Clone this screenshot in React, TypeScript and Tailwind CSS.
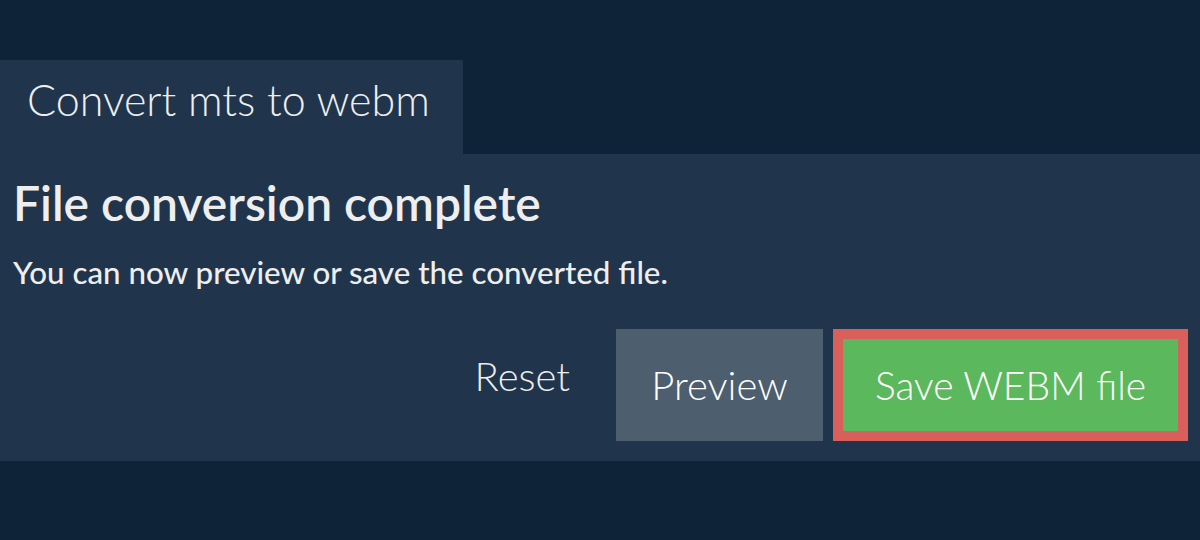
export default function App() {
  return (
    <div className="min-h-[540px] bg-[#0f2338] pt-[60px] font-['Lato','Liberation_Sans',sans-serif] text-[#eeeeee]">
      <div className="h-[94px] w-[463px] bg-[#20354c] pl-[27px] pt-[14px] text-[43px] leading-[1.2] font-light">
        Convert mts to webm
      </div>
      <section className="bg-[#20354c] pl-[13px] pr-[12px] pt-[20px] pb-[20px]">
        <h1 className="text-[48px] leading-[1.2] font-semibold">File conversion complete</h1>
        <p className="mt-[22px] text-[31.3px] leading-[1.2] font-medium">
          You can now preview or save the converted file.
        </p>
        <div className="mt-[38px] flex items-start justify-end">
          <button type="button" className="pt-[23px] text-[40px] leading-[1.2] font-light text-[#eeeeee]">
            Reset
          </button>
          <button
            type="button"
            className="ml-[46px] h-[112px] w-[207px] bg-[#4d5e6e] text-[40px] leading-[1.2] font-light text-white"
          >
            Preview
          </button>
          <button
            type="button"
            className="ml-[10px] h-[112px] w-[355px] border-[10px] border-[#d9605a] bg-[#5cb85c] text-[39px] leading-[1.2] font-light text-white"
          >
            Save WEBM file
          </button>
        </div>
      </section>
    </div>
  );
}
